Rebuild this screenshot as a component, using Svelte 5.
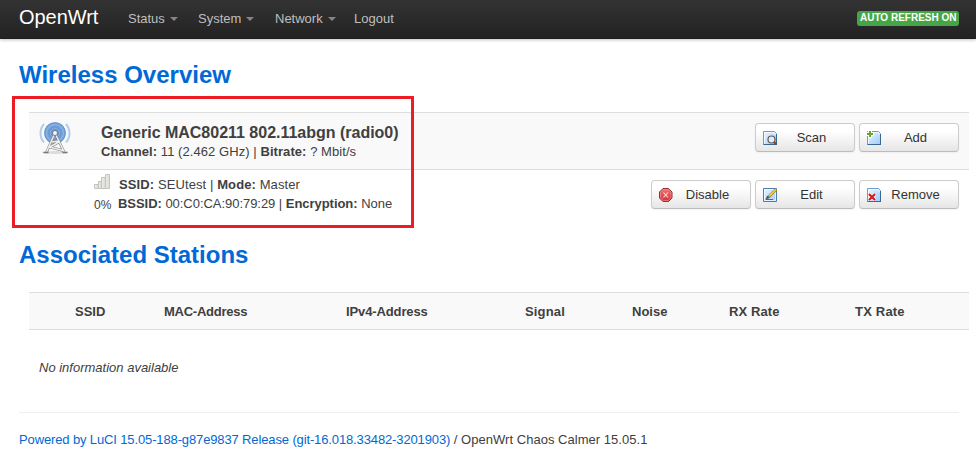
<script>
  const menus = [
    { label: 'Status', drop: true, w: 70 },
    { label: 'System', drop: true, w: 77 },
    { label: 'Network', drop: true, w: 79 },
    { label: 'Logout', drop: false, w: 60 }
  ];
  const columns = [
    { label: 'SSID', w: 89, tracking: 0 },
    { label: 'MAC-Address', w: 182, tracking: -0.25 },
    { label: 'IPv4-Address', w: 179, tracking: -0.12 },
    { label: 'Signal', w: 107, tracking: 0.15 },
    { label: 'Noise', w: 97, tracking: 0 },
    { label: 'RX Rate', w: 126, tracking: 0.1 },
    { label: 'TX Rate', w: 104, tracking: 0.2 }
  ];
</script>

{#snippet sheet()}
  <path d="M.5.5h11l2 2v11H.5z" fill="url(#paper)" stroke="#6d9cc8" />
  <path d="M1.5 12.5v-11h9.5M11.500 1v2h2" fill="none" stroke="#fff" stroke-opacity=".75" />
  <path d="M.5 13.500h13M13.500 3v11" stroke="#386790" />
{/snippet}

{#snippet button(label, kind)}
  <button type="button" class="btn">
    <svg class="icon" width="14" height="14" viewBox="0 0 14 14" aria-hidden="true">
      {#if kind === 'scan'}
        {@render sheet()}
        <circle cx="8.500" cy="8.500" r="3.500" fill="#dceeff" stroke="#63564f" stroke-width="1.200" />
        <path d="M11 11l2.600 2.700" stroke="#7e4120" stroke-width="2" />
      {:else if kind === 'add'}
        {@render sheet()}
        <path d="M3 0v7M0 3h7" stroke="#fff" stroke-width="4" />
        <path d="M3 0v6M0 3h6" stroke="#65a52a" stroke-width="2" />
      {:else if kind === 'disable'}
        <path d="M4 .5h5.500L13 4v6l-3.500 3.500H4L.5 10V4z" fill="url(#stop)" stroke="#942f33" />
        <path d="M4.300 1.500h5L12 4.300v5.400l-2.700 2.800h-5L1.500 9.700V4.300z" fill="none" stroke="#f49a98" stroke-opacity=".6" />
        <path d="M4.500 4.500l4.500 5M9 4.500l-4.500 5" stroke="#ffe2df" stroke-width="1.100" />
      {:else if kind === 'edit'}
        <path d="M.5.5h13v13H.5z" fill="url(#paper)" stroke="#4b7eaf" />
        <path d="M1.500 1.500h11v11h-11z" fill="none" stroke="#fff" stroke-opacity=".65" />
        <path d="M6 8.500L13.300 1.200" stroke="#8c7938" stroke-width="3" />
        <path d="M6.300 8L13 1.300" stroke="#f9c83b" stroke-width="1.800" />
        <path d="M2.200 11.800l2.200-4.300 2.600 2.200z" fill="#44576b" />
        <path d="M3 11.500h7" stroke="#37709f" />
      {:else}
        {@render sheet()}
        <path d="M2 6l6 6M8 6l-6 6" stroke="#fff" stroke-width="3.500" />
        <path d="M2 6l6 6M8 6l-6 6" stroke="#d71920" stroke-width="2.200" />
      {/if}
    </svg>
    <span>{label}</span>
  </button>
{/snippet}

<svg class="defs" width="0" height="0" aria-hidden="true">
  <defs>
    <linearGradient id="paper" x2="1" y2="1"><stop stop-color="#edf7ff" /><stop offset="1" stop-color="#9dcaff" /></linearGradient>
    <linearGradient id="stop" x2="0" y2="1"><stop stop-color="#f07575" /><stop offset="1" stop-color="#d52e36" /></linearGradient>
    <linearGradient id="bar" x2="1" y2="0"><stop stop-color="#efefec" /><stop offset="1" stop-color="#d8d8d4" /></linearGradient>
  </defs>
</svg>

<header>
  <div class="brand">OpenWrt</div>
  <nav>
    {#each menus as menu}
      <div class="menu" style:width="{menu.w}px"><span>{menu.label}</span>{#if menu.drop}<i></i>{/if}</div>
    {/each}
  </nav>
  <span class="refresh">AUTO REFRESH ON</span>
</header>

<main>
  <h2 class="wireless">Wireless Overview</h2>
  <section class="device">
    <svg class="antenna" width="32" height="34" viewBox="0 0 32 34" aria-hidden="true">
      <defs><radialGradient id="wave"><stop stop-color="#c5dcf4" /><stop offset=".3" stop-color="#5f94d2" /><stop offset="1" stop-color="#7fa9dc" /></radialGradient></defs>
      <ellipse cx="16" cy="30.500" rx="13" ry="1.500" fill="#999" opacity=".3" />
      <path d="M5 2a14 14 0 0 0 0 18.500M27 2a14 14 0 0 1 0 18.500" fill="none" stroke="#b4cce8" stroke-width="2" />
      <circle cx="16" cy="11" r="10.800" fill="url(#wave)" />
      <circle cx="16" cy="11" r="10.300" fill="none" stroke="#5b8ecb" stroke-opacity=".7" />
      <circle cx="16" cy="11" r="8.300" fill="none" stroke="#a3c4ea" stroke-opacity=".7" />
      <circle cx="16" cy="11" r="4.600" fill="none" stroke="#8db5e3" stroke-opacity=".8" />
      <path d="M15.300 12.500L7.500 30.300M16.700 12.500l8.500 17.800M13 20l7.500-1M20.500 19.500L10 25.500M10.500 25l13.500 3.500" fill="none" stroke="#808080" stroke-width="2.600" />
      <path d="M15.300 12.500L7.500 30M16.700 12.500l8.500 17.500M13 20l7.500-1M20.500 19.500L10 25.500M10.500 25l13.500 3.500" fill="none" stroke="#efefed" stroke-width="1.500" />
      <path d="M4.500 30.500h5M23.500 30.500h5" stroke="#777" stroke-width="1.500" />
      <circle cx="16" cy="11" r="2.500" fill="#fafafa" stroke="#707780" />
    </svg>
    <div class="info">
      <div class="name">Generic MAC80211 802.11abgn (radio0)</div>
      <div class="channel"><b>Channel:</b> 11 (2.462 GHz) | <b>Bitrate:</b> ? Mbit/s</div>
    </div>
    <div class="actions">
      {@render button('Scan', 'scan')}
      {@render button('Add', 'add')}
    </div>
  </section>
  <section class="network">
    <div class="strength">
      <svg width="17" height="16" viewBox="0 0 17 16" aria-hidden="true">
        <g fill="url(#bar)" stroke="#c4c4bf"><path d="M.5 10.500h4v4h-4z" /><path d="M4.500 7.500h3v7h-3z" /><path d="M7.500 3.500h4v11h-4z" /><path d="M11.500.5h4v14h-4z" /></g>
      </svg>
      <span>0%</span>
    </div>
    <div class="details">
      <div class="ssid"><b>SSID:</b> SEUtest | <b>Mode:</b> Master</div>
      <div class="bssid"><b>BSSID:</b> 00:C0:CA:90:79:29 | <b>Encryption:</b> None</div>
    </div>
    <div class="actions">
      {@render button('Disable', 'disable')}
      {@render button('Edit', 'edit')}
      {@render button('Remove', 'remove')}
    </div>
  </section>
  <div class="callout"></div>

  <h2 class="stations">Associated Stations</h2>
  <div class="head">
    {#each columns as column}
      <div style:width="{column.w}px" style:letter-spacing="{column.tracking}px">{column.label}</div>
    {/each}
  </div>
  <p class="empty">No information available</p>
  <footer>
    <a href="#luci">Powered by LuCI 15.05-188-g87e9837 Release (git-16.018.33482-3201903)</a><span class="version">{' / OpenWrt Chaos Calmer 15.05.1'}</span>
  </footer>
</main>

<style>
  :global(body) {
    margin: 0;
    background: #fff;
    color: #404040;
    font: 13px/18px 'Liberation Sans', Arial, sans-serif;
    overflow: hidden;
  }
  .defs { position: absolute; }
  header {
    display: flex;
    box-sizing: border-box;
    height: 39px;
    padding: 0 17px 0 19px;
    background: linear-gradient(#333, #222);
    box-shadow: 0 1px 3px rgba(0, 0, 0, 0.25), inset 0 -1px 0 rgba(0, 0, 0, 0.1);
    color: #bfbfbf;
  }
  .brand { width: 109px; color: #fff; font-size: 20px; line-height: 34px; letter-spacing: -0.05px; }
  nav { display: flex; height: 37px; line-height: 36px; }
  .menu { display: flex; align-items: center; white-space: nowrap; }
  .menu i {
    margin: 1px 0 0 5px;
    border: 4px solid transparent;
    border-top-color: #858585;
    border-bottom: 0;
  }
  .refresh {
    box-sizing: border-box;
    width: 102px;
    height: 15px;
    margin: 11px 0 0 auto;
    padding-left: 3px;
    border-radius: 3px;
    background: #46a546;
    color: #fff;
    font-size: 10px;
    font-weight: bold;
    line-height: 14px;
    white-space: nowrap;
  }
  main { padding: 0 7px 0 19px; }
  h2 { margin: 0; color: #0069d6; font-size: 24px; line-height: 36px; white-space: nowrap; }
  .wireless { padding: 18px 0 19px; }
  section { display: flex; box-sizing: border-box; margin-left: 10px; padding: 10px; white-space: nowrap; }
  .device { height: 58px; border: solid #ddd; border-width: 1px 0; background: #f9f9f9; }
  .antenna { flex: none; margin-top: -1px; }
  .info { margin-left: 30px; }
  .name { font-size: 16px; font-weight: bold; line-height: 19px; letter-spacing: -0.01px; }
  .channel { line-height: 20px; letter-spacing: 0.065px; }
  .network { height: 66px; padding-top: 5px; }
  .strength { display: flex; flex-direction: column; width: 24px; margin-left: 55px; font-size: 12px; }
  .strength svg { margin-top: -1px; }
  .strength span { margin-top: 6px; line-height: 18px; }
  .details { line-height: 19px; }
  .ssid { padding-left: 1px; letter-spacing: 0.1px; }
  .bssid { letter-spacing: -0.04px; }
  .actions { display: flex; gap: 4px; margin-left: auto; }
  .network .actions { padding-top: 5px; }
  .btn {
    display: flex;
    align-items: center;
    box-sizing: border-box;
    width: 100px;
    height: 29px;
    padding: 0 8px 0 7px;
    border: 1px solid #ccc;
    border-bottom-color: #bbb;
    border-radius: 4px;
    background: linear-gradient(#fff 25%, #e6e6e6);
    box-shadow: 0 1px 2px rgba(0, 0, 0, 0.05);
    color: #333;
    font: 13px/18px 'Liberation Sans', Arial, sans-serif;
  }
  .btn span { flex: 1; text-align: center; }
  .icon { flex: none; }
  .callout {
    position: absolute;
    box-sizing: border-box;
    left: 12px;
    top: 96px;
    width: 402px;
    height: 132px;
    border: 3px solid #ed1c24;
    pointer-events: none;
  }
  .stations { padding: 1px 0 19px; }
  .head {
    display: flex;
    box-sizing: border-box;
    height: 38px;
    margin-left: 10px;
    padding-left: 46px;
    border: solid #ddd;
    border-width: 1px 0;
    background: #f9f9f9;
    font-weight: bold;
    line-height: 38px;
    white-space: nowrap;
  }
  .empty { margin: 29px 20px 35px; font-style: italic; }
  footer { display: flex; margin-right: 10px; padding-top: 17px; border-top: 1px solid #eee; line-height: 20px; white-space: pre; }
  a { color: #0069d6; text-decoration: none; letter-spacing: -0.13px; }
  .version { letter-spacing: 0.03px; }
</style>
